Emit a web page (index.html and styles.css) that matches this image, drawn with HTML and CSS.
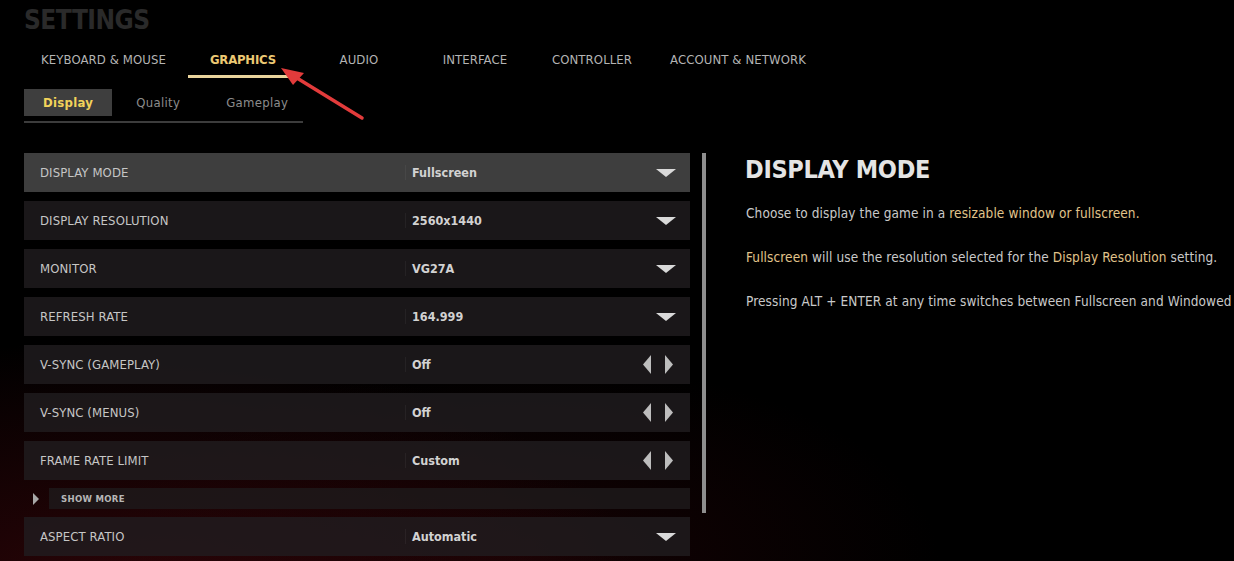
FILE: index.html
```html
<!DOCTYPE html>
<html lang="en">
<head>
  <meta charset="UTF-8">
  <title>Settings - Graphics</title>
  <link rel="stylesheet" href="styles.css">
</head>
<body>
<div class="page">
  <h1 class="title">SETTINGS</h1>

  <nav class="tabs">
    <span class="tab">KEYBOARD &amp; MOUSE</span>
    <span class="tab active">GRAPHICS</span>
    <span class="tab">AUDIO</span>
    <span class="tab">INTERFACE</span>
    <span class="tab">CONTROLLER</span>
    <span class="tab">ACCOUNT &amp; NETWORK</span>
  </nav>

  <div class="subtabs">
    <span class="subtab active">Display</span>
    <span class="subtab">Quality</span>
    <span class="subtab">Gameplay</span>
  </div>

  <div class="main">
    <div class="list">
      <div class="row selected">
        <span class="label">DISPLAY MODE</span>
        <span class="value">Fullscreen</span>
        <span class="control"><svg class="drop" viewBox="0 0 20 8"><polygon points="0,0 20,0 10,8"/></svg></span>
      </div>
      <div class="row">
        <span class="label">DISPLAY RESOLUTION</span>
        <span class="value">2560x1440</span>
        <span class="control"><svg class="drop" viewBox="0 0 20 8"><polygon points="0,0 20,0 10,8"/></svg></span>
      </div>
      <div class="row">
        <span class="label">MONITOR</span>
        <span class="value">VG27A</span>
        <span class="control"><svg class="drop" viewBox="0 0 20 8"><polygon points="0,0 20,0 10,8"/></svg></span>
      </div>
      <div class="row">
        <span class="label">REFRESH RATE</span>
        <span class="value">164.999</span>
        <span class="control"><svg class="drop" viewBox="0 0 20 8"><polygon points="0,0 20,0 10,8"/></svg></span>
      </div>
      <div class="row">
        <span class="label">V-SYNC (GAMEPLAY)</span>
        <span class="value">Off</span>
        <span class="control arrows">
          <svg class="step" viewBox="0 0 8 19"><polygon points="8,0 8,19 0,9.5"/></svg>
          <svg class="step" viewBox="0 0 8 19"><polygon points="0,0 8,9.5 0,19"/></svg>
        </span>
      </div>
      <div class="row">
        <span class="label">V-SYNC (MENUS)</span>
        <span class="value">Off</span>
        <span class="control arrows">
          <svg class="step" viewBox="0 0 8 19"><polygon points="8,0 8,19 0,9.5"/></svg>
          <svg class="step" viewBox="0 0 8 19"><polygon points="0,0 8,9.5 0,19"/></svg>
        </span>
      </div>
      <div class="row">
        <span class="label">FRAME RATE LIMIT</span>
        <span class="value">Custom</span>
        <span class="control arrows">
          <svg class="step" viewBox="0 0 8 19"><polygon points="8,0 8,19 0,9.5"/></svg>
          <svg class="step" viewBox="0 0 8 19"><polygon points="0,0 8,9.5 0,19"/></svg>
        </span>
      </div>
      <div class="show-more">
        <svg class="more-caret" viewBox="0 0 6 12"><polygon points="0,0 6,6 0,12"/></svg>
        <span class="more-box">SHOW MORE</span>
      </div>
      <div class="row">
        <span class="label">ASPECT RATIO</span>
        <span class="value">Automatic</span>
        <span class="control"><svg class="drop" viewBox="0 0 20 8"><polygon points="0,0 20,0 10,8"/></svg></span>
      </div>
    </div>

    <div class="scrollbar"></div>

    <aside class="info">
      <h2>DISPLAY MODE</h2>
      <p>Choose to display the game in a <em>resizable window or fullscreen.</em></p>
      <p><em>Fullscreen</em> will use the resolution selected for the <em>Display Resolution</em> setting.</p>
      <p>Pressing ALT + ENTER at any time switches between Fullscreen and Windowed</p>
    </aside>
  </div>
</div>

<!-- annotation arrow drawn over the tab bar -->
<svg class="pointer" width="1234" height="561" viewBox="0 0 1234 561">
  <line x1="362" y1="118" x2="292" y2="75" stroke="#e23b3b" stroke-width="3.5" stroke-linecap="round"/>
  <polygon points="281,68 304,73 293,85" fill="#e23b3b"/>
</svg>
</body>
</html>
```

FILE: styles.css
```css
html, body {
  margin: 0;
  height: 100%;
  overflow: hidden;
}
body {
  background-color: #000;
  background-image:
    radial-gradient(ellipse 520px 260px at 120px 600px, rgba(80, 8, 14, 0.55), transparent),
    radial-gradient(ellipse 420px 200px at 520px 560px, rgba(60, 6, 10, 0.35), transparent);
  font-family: "DejaVu Sans Condensed", "DejaVu Sans", sans-serif;
  color: #c4c4c4;
}
.page {
  padding-left: 24px;
}
.title {
  margin: 0;
  padding-top: 2px;
  font-size: 26px;
  line-height: 36px;
  letter-spacing: -0.5px;
  font-weight: bold;
  color: #2a2a2a;
}

/* top tabs */
.tabs {
  display: flex;
  gap: 6px;
  margin-top: 7px;
}
.tab {
  min-width: 110px;
  padding: 0 16px;
  box-sizing: border-box;
  text-align: center;
  font-size: 13px;
  line-height: 30px;
  letter-spacing: 0.1px;
  color: #b4b4b4;
  border-bottom: 3px solid transparent;
}
.tab:first-child {
  margin-left: 1px;
}
.tab.active {
  color: #ecc973;
  font-weight: bold;
  letter-spacing: -0.2px;
  border-bottom-color: #e9d49c;
}

/* sub tabs */
.subtabs {
  display: flex;
  gap: 2px;
  width: 279px;
  margin-top: 11px;
  padding-bottom: 5px;
  border-bottom: 2px solid #3c3c3c;
}
.subtab {
  padding: 0 22px;
  font-size: 13px;
  line-height: 27px;
  letter-spacing: 0.3px;
  color: #8c8c8c;
}
.subtab.active {
  padding: 0 19px;
  background: #3e3e3e;
  color: #f2d35a;
  font-weight: bold;
}

/* settings list */
.main {
  display: flex;
  margin-top: 30px;
}
.list {
  flex: 0 0 666px;
  display: flex;
  flex-direction: column;
  gap: 9px;
}
.row {
  display: grid;
  grid-template-columns: 381px 1fr auto;
  align-items: center;
  height: 39px;
  background: rgba(32, 29, 31, 0.8);
}
.row.selected {
  background: #3e3e3e;
}
.label {
  padding-left: 16px;
  font-size: 13px;
  letter-spacing: 0.1px;
  color: #c6c6c6;
}
.value {
  padding-left: 6px;
  border-left: 1px solid rgba(255, 255, 255, 0.05);
  font-size: 12.5px;
  font-weight: bold;
  color: #d2d2d2;
}
.control {
  display: flex;
  align-items: center;
  padding-right: 14px;
}
.drop {
  width: 20px;
  height: 8px;
  fill: #d9d9d9;
}
.arrows {
  gap: 14px;
  padding-right: 17px;
}
.step {
  width: 8px;
  height: 19px;
  fill: #bdbdbd;
}
.show-more {
  display: flex;
  align-items: center;
  height: 21px;
  margin: -1px 0;
}
.more-caret {
  width: 6px;
  height: 12px;
  margin: 0 10px 0 9px;
  fill: #a8a8a8;
}
.more-box {
  flex: 1;
  align-self: stretch;
  display: flex;
  align-items: center;
  padding-left: 12px;
  background: rgba(30, 26, 28, 0.8);
  font-size: 9.5px;
  font-weight: bold;
  letter-spacing: 0.3px;
  color: #b6b6b6;
}
.scrollbar {
  flex: none;
  width: 4px;
  height: 360px;
  margin-left: 12px;
  background: #8e8e8e;
}

/* description panel */
.info {
  margin-left: 39px;
  white-space: nowrap;
}
.info h2 {
  margin: 2px 0 0;
  font-size: 25px;
  line-height: 30px;
  letter-spacing: -0.3px;
  font-weight: bold;
  color: #e4e4e4;
}
.info p {
  margin: 0;
  padding-left: 1px;
  font-size: 13.5px;
  line-height: 44px;
  letter-spacing: 0.1px;
  color: #c9c9c9;
}
.info h2 + p {
  margin-top: 6px;
}
.info em {
  font-style: normal;
  color: #e1c48b;
}

.pointer {
  position: absolute;
  top: 0;
  left: 0;
  pointer-events: none;
}
```
